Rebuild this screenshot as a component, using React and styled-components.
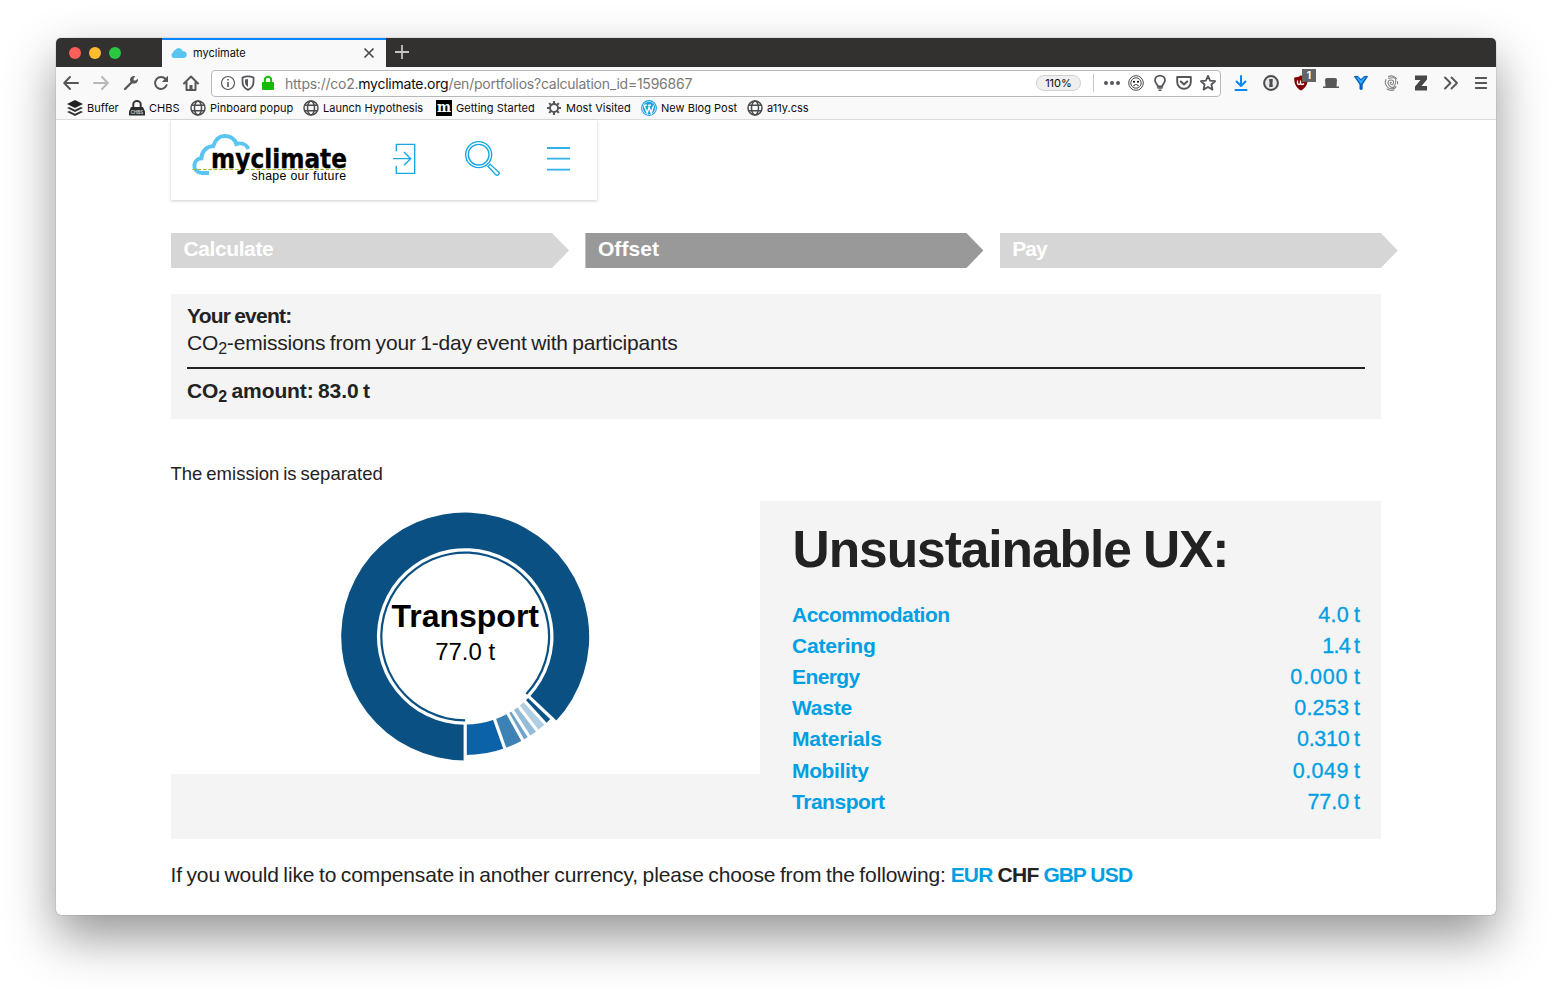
import React from "react";
import styled, { createGlobalStyle, css } from "styled-components";

const Global = createGlobalStyle`
  * { box-sizing: border-box; }
  html, body { margin: 0; background: #fff; }
  body { font-family: "Liberation Sans", Arial, sans-serif; color: #222; }
`;

const Desktop = styled.div`
  width: 1552px;
  height: 989px;
  padding: 38px 56px 74px;
  overflow: hidden;
`;

const Window = styled.div`
  display: flex;
  flex-direction: column;
  height: 877px;
  border-radius: 5px;
  overflow: hidden;
  background: #fff;
  box-shadow: 0 22px 50px rgba(0, 0, 0, 0.42), 0 0 1px rgba(0, 0, 0, 0.6);
  font-family: Inter, sans-serif;
`;

const TabBar = styled.div`
  display: flex;
  height: 29px;
  background: #33312f;
`;

const Lights = styled.div`
  display: flex;
  align-items: center;
  gap: 8px;
  width: 106px;
  padding: 1px 0 0 13px;
`;

const Light = styled.span`
  width: 12px;
  height: 12px;
  border-radius: 50%;
  background: ${(p) => p.$color};
`;

const Tab = styled.div`
  display: flex;
  align-items: center;
  width: 224px;
  padding: 0 10px 1px 9px;
  border-top: 2px solid #0a84ff;
  background: #f9f9fa;
  color: #0c0c0d;
  font-size: 11px;
`;

const TabTitle = styled.span`
  flex: 1;
  margin-left: 6px;
`;

const NewTab = styled.div`
  display: flex;
  align-items: center;
  padding: 0 0 1px 8px;
`;

const NavBar = styled.div`
  display: flex;
  align-items: center;
  height: 31px;
  padding: 1px 7px 0;
  background: #f9f9fa;
`;

const IconGroup = styled.div`
  display: flex;
  align-items: center;
  gap: ${(p) => p.$gap}px;
  svg { display: block; flex: none; overflow: visible; }
`;

const UrlBar = styled.div`
  display: flex;
  align-items: center;
  width: 1010px;
  height: 27px;
  margin: 0 12px;
  padding: 0 4px 0 8px;
  border: 1px solid #b9b9ba;
  border-radius: 4px;
  background: #fff;
`;

const Url = styled.span`
  flex: 1;
  margin-left: 9px;
  color: #7a7a7b;
  font-size: 14px;
  white-space: nowrap;
  letter-spacing: -0.24px;
  b { font-weight: 400; color: #0c0c0d; }
`;

const Zoom = styled.span`
  display: flex;
  align-items: center;
  justify-content: center;
  width: 45px;
  height: 16px;
  border: 1px solid #d0d0d2;
  border-radius: 8px;
  background: #efeff0;
  color: #0c0c0d;
  font-size: 11px;
`;

const Divider = styled.span`
  width: 1px;
  height: 18px;
  margin: 0 10px 0 12px;
  background: #c8c8ca;
`;

const Badged = styled.span`
  position: relative;
  display: block;
`;

const Badge = styled.span`
  position: absolute;
  top: -6px;
  left: 9px;
  width: 14px;
  height: 13px;
  background: #646466;
  color: #fff;
  font-size: 10px;
  font-weight: 700;
  line-height: 13px;
  text-align: center;
`;

const Bookmarks = styled.div`
  display: flex;
  gap: 10px;
  height: 22px;
  padding: 0 11px;
  border-bottom: 1px solid #dcdcdd;
  background: #f9f9fa;
`;

const Bookmark = styled.div`
  display: flex;
  align-items: center;
  gap: 4px;
  width: ${(p) => p.$width}px;
  height: 20px;
  color: #0c0c0d;
  font-size: 11px;
  letter-spacing: 0.02px;
  white-space: nowrap;
  svg { display: block; flex: none; }
`;

const Page = styled.main`
  flex: 1;
  padding: 0 115px;
  font-family: "Liberation Sans", Arial, sans-serif;
  font-size: 21px;
  color: #222;
`;

const SiteHeader = styled.header`
  width: 426px;
  height: 80px;
  box-shadow: 0 1px 3px rgba(0, 0, 0, 0.2);
  svg { display: block; }
`;

const Steps = styled.div`
  display: flex;
  gap: 16px;
  width: 1228px;
  margin-top: 33px;
`;

const Step = styled.div`
  flex: none;
  width: 398.4px;
  height: 35px;
  padding-left: 12.5px;
  clip-path: polygon(0 0, 381px 0, 398px 50%, 381px 100%, 0 100%);
  background: ${(p) => (p.$active ? "#999" : "#d6d6d6")};
  color: #fff;
  font-weight: 700;
  line-height: 31px;
`;

const Text = styled.span`
  display: inline-block;
  white-space: nowrap;
  letter-spacing: ${(p) => p.$track || 0}px;
  word-spacing: -1.2px;
  ${(p) => p.$bold && css`font-weight: 700;`}
  sub {
    font-size: 16px;
    line-height: 0;
    vertical-align: -4px;
  }
`;

const Summary = styled.section`
  height: 125px;
  margin-top: 26px;
  padding: 8px 16px 0;
  background: #f4f4f4;
  line-height: 27px;
`;

const SummaryLine = styled.div`
  height: 27px;
`;

const Rule = styled.div`
  height: 2px;
  margin: 11px 0 8px;
  background: #222;
`;

const Intro = styled.p`
  margin: 43px 0 0 -0.5px;
  height: 39px;
  font-size: 18.5px;
  line-height: 24px;
`;

const Breakdown = styled.section`
  display: flex;
  align-items: flex-start;
  height: 338px;
  background: #f4f4f4;
`;

const ChartPane = styled.div`
  width: 589px;
  height: 273px;
  background: #fff;
  svg { display: block; }
`;

const Details = styled.div`
  flex: 1;
  padding: 17px 21px 0 32px;
`;

const Title = styled.h1`
  margin: 0 0 19px 0.5px;
  height: 62px;
  font-size: 51.5px;
  line-height: 62px;
`;

const Row = styled.div`
  display: flex;
  justify-content: space-between;
  height: 31.12px;
  color: #009fe3;
  line-height: 31px;
`;

const Amount = styled(Text)`
  padding-top: 1px;
  font-size: 21.5px;
  -webkit-text-stroke: 0.3px #009fe3;
  margin-right: ${(p) => -(p.$track || 0)}px;
`;

const Currency = styled.p`
  display: flex;
  gap: 4.8px;
  margin: 22px 0 0 -0.5px;
  line-height: 28px;
`;

const Choice = styled(Text)`
  font-weight: 700;
  color: ${(p) => (p.$current ? "#222" : "#009fe3")};
`;

const G = "#55555a";
const line = { fill: "none", stroke: G, strokeWidth: 2, strokeLinecap: "round", strokeLinejoin: "round" };

const Icon = ({ children }) => (
  <svg width="16" height="16" viewBox="0 0 16 16">{children}</svg>
);

const Globe = () => (
  <Icon>
    <g fill="none" stroke="#4a4a4f" strokeWidth="1.5">
      <circle cx="8" cy="8" r="7" />
      <ellipse cx="8" cy="8" rx="3.5" ry="7" />
      <path d="M1.8 5.3H14.2M1.8 10.7H14.2" />
    </g>
  </Icon>
);

const bookmarks = [
  { name: "Buffer", width: 52, icon: (
    <Icon>
      <path d="M8 0 16 4 8 8 0 4Z" fill="#222" />
      <path d="M0 8 2.2 6.9 8 9.8 13.8 6.9 16 8 8 12ZM0 12 2.2 10.9 8 13.8 13.8 10.9 16 12 8 16Z" fill="#333" />
    </Icon>) },
  { name: "CHBS", width: 51, icon: (
    <Icon>
      <path d="M4.3 8V4.2a3.7 3.2 0 0 1 7.4 0V8" fill="none" stroke="#333" strokeWidth="2" />
      <path d="M2 7H14L16 11.5V15.5H0V11.5Z" fill="#2c2c2c" />
      <text x="8" y="13.6" fontSize="4.5" fontWeight="700" fill="#ccc" textAnchor="middle">CHBS</text>
    </Icon>) },
  { name: "Pinboard popup", width: 103, icon: <Globe /> },
  { name: "Launch Hypothesis", width: 123, icon: <Globe /> },
  { name: "Getting Started", width: 100, icon: (
    <Icon>
      <rect width="16" height="16" fill="#000" />
      <text x="8" y="12" fontSize="14.5" fontWeight="700" fill="#fff" textAnchor="middle" fontFamily="DejaVu Serif, serif" textLength="14" lengthAdjust="spacingAndGlyphs">m</text>
    </Icon>) },
  { name: "Most Visited", width: 85, icon: (
    <Icon>
      <circle cx="8" cy="8" r="4" fill="none" stroke={G} strokeWidth="1.9" />
      <path d="M8 1V4M8 12V15M1 8H4M12 8H15M3.1 3.1 5 5M11 11 12.9 12.9M12.9 3.1 11 5M5 11 3.1 12.9" stroke={G} strokeWidth="2" />
    </Icon>) },
  { name: "New Blog Post", width: 96, icon: (
    <Icon>
      <circle cx="8" cy="8" r="7.4" fill="#fff" stroke="#1ba1dc" strokeWidth="1.1" />
      <circle cx="8" cy="8" r="6.2" fill="#1ba1dc" />
      <path d="M3 5.2 6.2 13 8.1 7.2 10.2 13 12.6 5.5M2.6 5.2H5.8M6.9 5.2H10" fill="none" stroke="#fff" strokeWidth="1.4" />
    </Icon>) },
  { name: "a11y.css", width: 64, icon: <Globe /> },
];

const emissions = [
  ["Accommodation", -0.54, "4.0 t", 0.3],
  ["Catering", -0.2, "1.4 t", -0.7],
  ["Energy", -0.6, "0.000 t", 0.85],
  ["Waste", -0.22, "0.253 t", 0.2],
  ["Materials", -0.13, "0.310 t", -0.25],
  ["Mobility", -0.36, "0.049 t", 0.45],
  ["Transport", -0.48, "77.0 t", 0],
];

const CX = 294.2;
const CY = 135.5;
const at = (deg, r) => {
  const a = (deg * Math.PI) / 180;
  return [CX + Math.sin(a) * r, CY + Math.cos(a) * r];
};
const wedge = (from, to, inner, outer) => {
  const big = to - from > 180 ? 1 : 0;
  const [a, b, c, d] = [at(from, outer), at(to, outer), at(to, inner), at(from, inner)];
  return `M${a}A${outer} ${outer} 0 ${big} 0 ${b}L${c}A${inner} ${inner} 0 ${big} 1 ${d}Z`;
};
const slices = [
  [0, 19.5, "#0b62a6"],
  [19.5, 29, "#3c82b5"],
  [29, 32.6, "#6ea3cc"],
  [32.6, 37.4, "#94bbd8"],
  [37.4, 42.6, "#b0cee2"],
  [42.6, 46.6, "#0a5488"],
];

const Donut = () => (
  <svg width="589" height="273" viewBox="0 0 589 273">
    {slices.map(([from, to, color]) => (
      <path key={from} d={wedge(from, to, 88, 118.5)} fill={color} />
    ))}
    <path d={wedge(46.6, 360, 88.3, 124)} fill="#0a5083" />
    {[0, ...slices.map((s) => s[1])].map((deg) => {
      const [x1, y1] = at(deg, 86.5);
      const [x2, y2] = at(deg, 127);
      return <line key={deg} x1={x1} y1={y1} x2={x2} y2={y2} stroke="#fff" strokeWidth="3.2" />;
    })}
    <path d={wedge(46.8, 360, 82.8, 85)} fill="#0a5083" />
    <text x="294.2" y="126" fontSize="32" fontWeight="700" fill="#000" textAnchor="middle">Transport</text>
    <text x="294.2" y="159" fontSize="24" fill="#000" textAnchor="middle">77.0 t</text>
  </svg>
);

const HeaderArt = () => (
  <svg width="426" height="80" viewBox="0 0 426 80">
    <g transform="translate(-11 -5) scale(.33333)" fill="none">
      <path d="M147 174H126C110 172 102 161 103 150C104 138 114 131 124 130C125 109 140 94 160 93C166 73 180 62 195 63C213 64 225 74 229 87C246 82 260 89 265 102" stroke="#5bc5f2" strokeWidth="12" />
      <path d="M97 163.5H558" stroke="#a8b820" strokeWidth="3" strokeDasharray="11 5" />
      <g stroke="#1aa7e4" strokeWidth="4.2">
        <path d="M709 109V88H764V175H709V152M699 131H751M732 111 752 131 732 151" />
        <circle cx="956" cy="119" r="39" />
        <circle cx="956" cy="119" r="31" />
        <path d="M984 154 1007 179Q1012 183 1016 178T1015 171L991 148Z" />
      </g>
      <path d="M1161 99H1230M1161 131H1230M1161 164H1230" stroke="#2fb0e8" strokeWidth="5.5" />
    </g>
    <text x="40" y="47.5" fontFamily="DejaVu Sans, sans-serif" fontSize="26" fontWeight="700" fill="#000" stroke="#000" strokeWidth=".4" textLength="136" lengthAdjust="spacingAndGlyphs">myclimate</text>
    <text x="80.5" y="60.3" fontSize="12.3" fill="#000" textLength="94.5" lengthAdjust="spacing">shape our future</text>
  </svg>
);

export default function App() {
  return (
    <>
      <Global />
      <Desktop>
        <Window>
          <TabBar>
            <Lights>
              <Light $color="#ff5f57" />
              <Light $color="#febc2e" />
              <Light $color="#28c840" />
            </Lights>
            <Tab>
              <Icon><path d="M2.5 13a3 3 0 0 1-.4-5.500A3 3 0 0 1 4.500 4.800 4 4 0 0 1 11.700 6.300 3.400 3.400 0 0 1 13 13Z" fill="#5bc5f2" /></Icon>
              <TabTitle>myclimate</TabTitle>
              <svg width="14" height="14" viewBox="0 0 14 14"><path d="M2.500 2.500 11.500 11.500M11.500 2.500 2.500 11.500" stroke="#4a4a4f" strokeWidth="1.7" /></svg>
            </Tab>
            <NewTab><Icon><path d="M8 1V15M1 8H15" stroke="#c4c4c4" strokeWidth="1.8" /></Icon></NewTab>
          </TabBar>
          <NavBar>
            <IconGroup $gap={14}>
              <Icon><path d="M15 8H1.500M7 2 1.200 8 7 14" {...line} /></Icon>
              <Icon><path d="M1 8H14.500M9 2 14.800 8 9 14" {...line} stroke="#b8b8ba" /></Icon>
              <Icon>
                <path d="M2 14 9 7" {...line} strokeWidth="2.3" />
                <path d="M12.300 1.200 10.600 3.500V5.400H12.500L14.800 3.700A4 3.800 0 1 1 12.300 1.200Z" fill={G} />
              </Icon>
              <Icon>
                <path d="M13.600 10.200A6 6 0 1 1 12.600 4" {...line} />
                <path d="M15 .8V7H8.800Z" fill={G} />
              </Icon>
              <Icon>
                <path d="M1 8.500 8 1.500 15 8.500M3.500 7.500V15H12.500V7.500" {...line} />
                <path d="M6.500 15V10H9.500V15Z" fill={G} />
              </Icon>
            </IconGroup>
            <UrlBar>
              <IconGroup $gap={4}>
                <Icon><circle cx="8" cy="8" r="6.5" fill="none" stroke={G} strokeWidth="1.2" /><path d="M8 7V12M8 4V5.600" stroke={G} strokeWidth="1.6" /></Icon>
                <Icon><path d="M8 1.300C10 1.300 12 1.800 13.500 2.500V7C13.500 11 11 13.500 8 14.800 5 13.500 2.500 11 2.500 7V2.500C4 1.800 6 1.300 8 1.300Z" fill="none" stroke={G} strokeWidth="1.8" /><path d="M8 4V12C6.200 10.800 5 9.500 5 7V4.500Z" fill={G} /></Icon>
                <Icon><rect x="2" y="7" width="12" height="8" rx="1" fill="#12bc00" /><path d="M4.800 8V5a3.200 3.200 0 0 1 6.400 0V8" fill="none" stroke="#12bc00" strokeWidth="2" /></Icon>
              </IconGroup>
              <Url>https://co2.<b>myclimate.org</b>/en/portfolios?calculation_id=1596867</Url>
              <Zoom>110%</Zoom>
              <Divider />
              <IconGroup $gap={8}>
                <Icon><g fill={G}><circle cx="2" cy="8" r="2" /><circle cx="8" cy="8" r="2" /><circle cx="14" cy="8" r="2" /></g></Icon>
                <Icon><g fill="none" stroke="#4a4a4f"><circle cx="8" cy="8" r="7.3" strokeWidth="1" /><circle cx="8" cy="8" r="5.2" strokeWidth="1" /><path d="M5.500 11Q8 8 10.500 11" strokeWidth="1.2" /></g><circle cx="6" cy="6.8" r="1" /><circle cx="10" cy="6.8" r="1" /></Icon>
                <Icon><path d="M5.800 11.500C5.800 9 3 8.500 3 5.300a5 4.700 0 0 1 10 0C13 8.500 10.200 9 10.200 11.500Z" fill="none" stroke={G} strokeWidth="1.8" /><path d="M5.500 13H10.500M6.500 15.200H9.500" stroke={G} strokeWidth="1.5" /></Icon>
                <Icon><path d="M1.200 2H14.800V7a6.800 6.800 0 0 1-13.600 0Z" {...line} strokeWidth="1.9" /><path d="M4.800 6.500 8 9.500 11.200 6.500" {...line} /></Icon>
                <Icon><path d="M8 .9 10.100 5.600 15.200 6.100 11.400 9.500 12.500 14.600 8 12 3.500 14.600 4.600 9.500.8 6.100 5.900 5.600Z" {...line} strokeWidth="1.8" /></Icon>
              </IconGroup>
            </UrlBar>
            <IconGroup $gap={14}>
              <Icon><path d="M8 1V11M3.500 6.500 8 11 12.500 6.500M2.500 15H13.500" {...line} stroke="#0a84ff" /></Icon>
              <Icon><circle cx="8" cy="8" r="6.9" fill="#e8e8e8" stroke="#4a4a4f" strokeWidth="2" /><path d="M6.300 4H9.700V7.200L9 8 9.700 8.800V12H6.300V8.800L7 8 6.300 7.200Z" fill="#4a4a4f" /></Icon>
              <Badged>
                <Icon><path d="M8 .3C10 2 12 2.500 14.800 2.500 15.200 9 12 13.500 8 15.500 4 13.500.8 9 1.200 2.500 4 2.500 6 2 8 .3Z" fill="#800000" /><path d="M4.500 5.500V8.500Q6 10.500 7.500 8.500V5.500M7.500 8.500Q9.500 10.500 11 8.500" fill="none" stroke="#fff" strokeWidth="1.3" /></Icon>
                <Badge>1</Badge>
              </Badged>
              <Icon><path d="M2.500 11.500 2 5Q2 3 4 3H12Q14 3 14 5L13.500 11.500H16V13H0V11.500Z" fill="#58585a" /></Icon>
              <Icon><path d="M.8 1.200Q3.500 0 5.500 1.500L8 4 10.500 1.500Q12.500 0 15.200 1.200L9.700 9.500V14Q8 15.800 6.500 14V9.500Z" fill="#0c5fbe" /><path d="M3.200 2.200 5 2.300 8 5.600 11 2.300 12.800 2.200 8.600 8.600H7.400Z" fill="#2fa8ff" /></Icon>
              <Icon><g fill="none" stroke="#858587" strokeWidth="1.1" strokeLinecap="round"><path d="M8.500 7.500Q7.500 7 7.200 8T8.500 9.500 10.500 7.500 8 5 5 7.500 8 12 12.500 8 9.500 2.800 5.500 3.200" /><path d="M5.500 1.500Q10-.5 13.500 3.500M2.800 4.500Q1.500 8 3.500 11T9 13.800 13 11.500M14.600 6.500V9M4 14Q7 16 11 15" /></g></Icon>
              <Icon><path d="M2 .5H14V4.500L8.500 11H14V15.500H2V11.500L7.500 5H2Z" fill="#47474a" /></Icon>
              <Icon><path d="M2 2.500 7.500 8 2 13.500M8.500 2.500 14 8 8.500 13.500" {...line} strokeWidth="1.9" /></Icon>
              <Icon><path d="M2.800 3H13.200M2.800 8H13.200M2.800 13H13.200" {...line} /></Icon>
            </IconGroup>
          </NavBar>
          <Bookmarks>
            {bookmarks.map((b) => (
              <Bookmark key={b.name} $width={b.width}>{b.icon}<span>{b.name}</span></Bookmark>
            ))}
          </Bookmarks>
          <Page>
            <SiteHeader><HeaderArt /></SiteHeader>
            <Steps>
              <Step><Text $track={-0.4}>Calculate</Text></Step>
              <Step $active><Text $track={0.1}>Offset</Text></Step>
              <Step><Text $track={-1}>Pay</Text></Step>
            </Steps>
            <Summary>
              <SummaryLine><Text $bold $track={-0.75}>Your event:</Text></SummaryLine>
              <SummaryLine><Text $track={-0.18}>CO<sub>2</sub>-emissions from your 1-day event with participants</Text></SummaryLine>
              <Rule />
              <SummaryLine><Text $bold $track={-0.12}>CO<sub>2</sub> amount: 83.0 t</Text></SummaryLine>
            </Summary>
            <Intro><Text>The emission is separated</Text></Intro>
            <Breakdown>
              <ChartPane><Donut /></ChartPane>
              <Details>
                <Title><Text $track={-1.05}>Unsustainable UX:</Text></Title>
                {emissions.map(([name, track, amount, amountTrack]) => (
                  <Row key={name}>
                    <Text $bold $track={track}>{name}</Text>
                    <Amount $track={amountTrack}>{amount}</Amount>
                  </Row>
                ))}
              </Details>
            </Breakdown>
            <Currency>
              <Text $track={-0.11}>If you would like to compensate in another currency, please choose from the following:</Text>
              <Choice $track={-0.8}>EUR</Choice>
              <Choice $current $track={-0.6}>CHF</Choice>
              <Choice $track={-1.2}>GBP</Choice>
              <Choice $track={-0.7}>USD</Choice>
            </Currency>
          </Page>
        </Window>
      </Desktop>
    </>
  );
}
